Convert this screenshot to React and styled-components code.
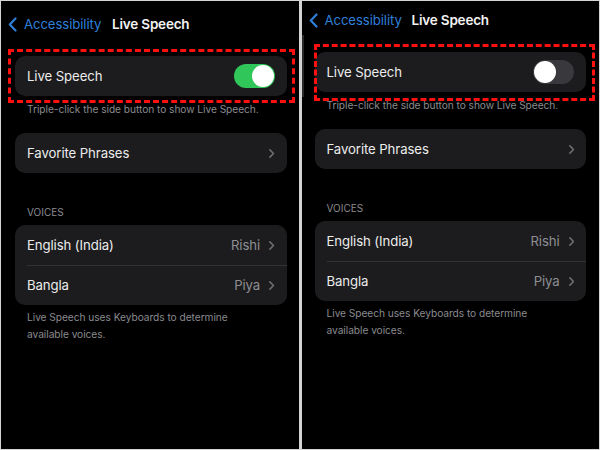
import React from 'react';
import styled, { createGlobalStyle } from 'styled-components';

const GlobalStyle = createGlobalStyle`
  html, body {
    margin: 0;
    padding: 0;
    background: #ffffff;
  }
  body {
    font-family: Inter, "Noto Sans", "DejaVu Sans", sans-serif;
    -webkit-font-smoothing: antialiased;
  }
`;

const Frame = styled.div`
  width: 600px;
  height: 450px;
  box-sizing: border-box;
  display: flex;
  gap: 3px;
  padding: 1px;
  background: #d4d4d4;
`;

const Panel = styled.div`
  position: relative;
  flex: 1;
  background: #000;
  padding-top: ${p => p.$top}px;
  padding-left: ${p => p.$inset}px;
  padding-right: ${p => 297 - 271 - p.$inset}px;
  overflow: hidden;
`;

const EdgeMark = styled.div`
  position: absolute;
  left: 0;
  top: 34px;
  width: 2px;
  height: 62px;
  background: #2a2a2c;
`;

const Nav = styled.div`
  display: grid;
  grid-template-columns: minmax(0, 1fr) auto minmax(0, 1fr);
  align-items: center;
  height: 32px;
  margin: 0 -${p => p.$inset}px;
  padding: 0 7px;
`;

const Back = styled.div`
  display: flex;
  align-items: center;
  gap: 7px;
  color: #2f7fd9;
  font-size: 13.2px;
  letter-spacing: -0.1px;
  white-space: nowrap;
`;

const Title = styled.div`
  color: #f2f2f2;
  font-size: 13.5px;
  font-weight: 600;
  letter-spacing: -0.2px;
`;

const Group = styled.div`
  position: relative;
  background: #1c1c1e;
  border-radius: 10px;
  margin-top: ${p => p.$mt}px;
`;

const Row = styled.div`
  display: flex;
  align-items: center;
  height: 40px;
  padding: 0 12px;
  color: #ececec;
  font-size: 13.2px;
  letter-spacing: -0.1px;
  & + & {
    box-shadow: inset 0 1px 0 #333335;
    margin-left: 12px;
    padding-left: 0;
  }
`;

const Label = styled.span`
  flex: 1;
`;

const Value = styled.span`
  color: #8e8e93;
  margin-right: 9px;
`;

const Footer = styled.div`
  color: #8a8a8f;
  font-size: 10.2px;
  line-height: ${p => p.$lh || 14}px;
  padding: 0 12px;
  margin-top: ${p => p.$mt}px;
  letter-spacing: -0.05px;
`;

const Header = styled.div`
  color: #8a8a8f;
  font-size: 10px;
  line-height: 14px;
  padding: 0 12px;
  margin-top: ${p => p.$mt}px;
  text-transform: uppercase;
`;

const Track = styled.div`
  position: relative;
  width: 41px;
  height: 24px;
  border-radius: 12px;
  background: ${p => (p.$on ? '#31c659' : '#39393d')};
`;

const Knob = styled.div`
  position: absolute;
  top: 1px;
  left: ${p => (p.$on ? '18px' : '1px')};
  width: 22px;
  height: 22px;
  border-radius: 50%;
  background: #fff;
`;

const Highlight = styled.div`
  position: absolute;
  top: ${p => p.$b[0]}px;
  right: ${p => p.$b[1]}px;
  bottom: ${p => p.$b[2]}px;
  left: ${p => p.$b[3]}px;
  border: 3px dashed #ff1010;
  pointer-events: none;
`;

const Chevron = ({ size = 9, color = '#6e6e73', w = 1.7 }) => (
  <svg width={size * 0.6} height={size} viewBox="0 0 6 10" fill="none">
    <path d="M1 1l4 4-4 4" stroke={color} strokeWidth={w} strokeLinecap="round" strokeLinejoin="round" />
  </svg>
);

const BackChevron = () => (
  <svg width="9" height="15" viewBox="0 0 9 15" fill="none">
    <path d="M7.5 1.5L1.8 7.5l5.7 6" stroke="#2f7fd9" strokeWidth="2.2" strokeLinecap="round" strokeLinejoin="round" />
  </svg>
);

const Toggle = ({ on }) => (
  <Track $on={on}>
    <Knob $on={on} />
  </Track>
);

const Screen = ({ on, top, inset, box, edge }) => (
  <Panel $top={top} $inset={inset}>
    {edge && <EdgeMark />}
    <Nav $inset={inset}>
      <Back>
        <BackChevron />
        Accessibility
      </Back>
      <Title>Live Speech</Title>
      <span />
    </Nav>

    <Group $mt={16}>
      <Row>
        <Label>Live Speech</Label>
        <Toggle on={on} />
      </Row>
      <Highlight $b={box} />
    </Group>
    <Footer $mt={6}>Triple-click the side button to show Live Speech.</Footer>

    <Group $mt={17}>
      <Row>
        <Label>Favorite Phrases</Label>
        <Chevron />
      </Row>
    </Group>

    <Header $mt={32}>Voices</Header>
    <Group $mt={6}>
      <Row>
        <Label>English (India)</Label>
        <Value>Rishi</Value>
        <Chevron />
      </Row>
      <Row>
        <Label>Bangla</Label>
        <Value>Piya</Value>
        <Chevron />
      </Row>
    </Group>
    <Footer $mt={4} $lh={17}>
      Live Speech uses Keyboards to determine
      <br />
      available voices.
    </Footer>
  </Panel>
);

export default function App() {
  return (
    <>
      <GlobalStyle />
      <Frame>
        <Screen on top={7} inset={14} box={[-7, -8, -7, -7]} />
        <Screen on={false} top={3} inset={13} box={[-8, -9, -9, -1]} edge />
      </Frame>
    </>
  );
}
